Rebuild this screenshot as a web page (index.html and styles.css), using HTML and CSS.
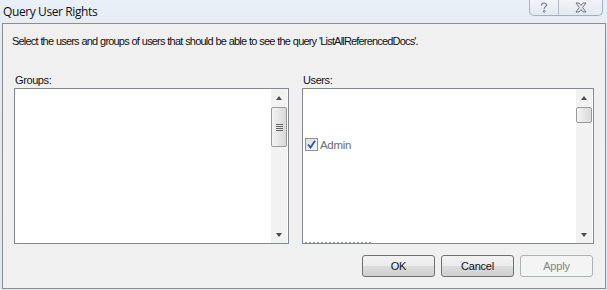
FILE: index.html
```html
<!DOCTYPE html>
<html>
<head>
<meta charset="utf-8">
<link rel="stylesheet" href="styles.css">
</head>
<body>
<div class="window">
  <div class="titlebar">
    <span class="title">Query User Rights</span>
    <div class="captions">
      <div class="cap help"><svg width="10" height="11" viewBox="0 0 10 11"><path d="M2.5 3.5 C2.5 1.5 3.8 1 5 1 C6.4 1 7.5 1.8 7.5 3 C7.5 4.4 5.2 4.8 5.2 6.5 L5.2 7" fill="none" stroke="#6b7580" stroke-width="1.1"/><circle cx="5.2" cy="9.3" r="1" fill="none" stroke="#6b7580" stroke-width="0.9"/></svg></div>
      <div class="cap close"><svg width="14" height="11" viewBox="0 0 14 11"><path d="M2 1 L5 1 L7 3.5 L9 1 L12 1 L8.6 5.5 L12 10 L9 10 L7 7.5 L5 10 L2 10 L5.4 5.5 Z" fill="none" stroke="#6b7580" stroke-width="1"/></svg></div>
    </div>
  </div>
  <div class="client">
    <p class="desc">Select the users and groups of users that should be able to see the query 'ListAllReferencedDocs'.</p>
    <div class="panes">
      <div class="pane groups">
        <div class="label">Groups:</div>
        <div class="listbox">
          <div class="items"></div>
          <div class="scroll">
            <div class="arrow up"></div>
            <div class="track"><div class="thumb big"><span></span><span></span><span></span><span></span></div></div>
            <div class="arrow down"></div>
          </div>
        </div>
      </div>
      <div class="pane users">
        <div class="label">Users:</div>
        <div class="listbox">
          <div class="items">
            <div class="item"><span class="check"><svg width="9" height="9" viewBox="0 0 9 9"><path d="M1 4.5 L3.5 7.5 L8 0.8" fill="none" stroke="#2c55a8" stroke-width="1.8"/></svg></span><span class="name">Admin</span></div>
            <div class="cutoff"></div>
          </div>
          <div class="scroll">
            <div class="arrow up"></div>
            <div class="track"><div class="thumb small"></div></div>
            <div class="arrow down"></div>
          </div>
        </div>
      </div>
    </div>
    <div class="buttons">
      <button class="btn">OK</button>
      <button class="btn">Cancel</button>
      <button class="btn disabled">Apply</button>
    </div>
  </div>
</div>
</body>
</html>
```
FILE: styles.css
```css
html, body {
  margin: 0;
  padding: 0;
}
body {
  width: 607px;
  height: 290px;
  overflow: hidden;
  background: #e4ebf3;
  font-family: "Liberation Sans", Arial, sans-serif;
}
.window {
  width: 607px;
  height: 290px;
  background: linear-gradient(to bottom, #eaf0f7 0px, #e3eaf3 40px, #dfe7f1 290px);
}
.titlebar {
  height: 23px;
  display: flex;
  align-items: flex-start;
}
.title {
  font-family: "Open Sans", "Noto Sans", sans-serif;
  font-size: 12px;
  color: #111;
  padding-left: 3px;
  margin-top: 3px;
  letter-spacing: -0.4px;
}
.captions {
  margin-left: auto;
  margin-right: 4px;
  display: flex;
  height: 15px;
  border: 1px solid #a6b0bd;
  border-top: none;
  border-radius: 0 0 5px 5px;
  background: linear-gradient(to bottom, #f1f4f8, #e4e9f0);
}
.cap {
  display: flex;
  align-items: center;
  justify-content: center;
}
.cap.help {
  width: 28px;
  border-right: 1px solid #b4bcc7;
}
.cap.close {
  width: 43px;
}
.client {
  margin-left: 2px;
  margin-right: 1px;
  height: 264px;
  border: 1px solid #8d8d8d;
  background: #f0f0f0;
  display: flex;
  flex-direction: column;
}
.desc {
  margin: 11px 0 0 9px;
  font-size: 11px;
  line-height: 13px;
  color: #111;
  letter-spacing: -0.82px;
  word-spacing: 0.5px;
}
.panes {
  display: flex;
  margin-top: 26px;
  margin-left: 11px;
  gap: 13px;
}
.pane {
  display: flex;
  flex-direction: column;
}
.groups { width: 275px; }
.users { width: 292px; }
.label {
  font-size: 11px;
  line-height: 13px;
  height: 13px;
  padding-left: 1px;
  color: #111;
  letter-spacing: -0.4px;
}
.listbox {
  margin-top: 1px;
  height: 154px;
  border: 1px solid #828790;
  background: #fff;
  display: flex;
}
.items {
  flex: 1;
  position: relative;
}
.scroll {
  width: 16px;
  margin-right: 1px;
  background: #f2f2f2;
  display: flex;
  flex-direction: column;
}
.arrow {
  height: 17px;
  display: flex;
  align-items: center;
  justify-content: center;
}
.arrow::before {
  content: "";
  width: 0;
  height: 0;
  border-left: 3.5px solid transparent;
  border-right: 3.5px solid transparent;
}
.arrow.up::before {
  border-bottom: 4px solid #4d4d4d;
}
.arrow.down::before {
  border-top: 4px solid #4d4d4d;
}
.track {
  flex: 1;
}
.thumb {
  margin: 1px 0 0 0;
  border: 1px solid #9a9a9a;
  border-radius: 2px;
  background: linear-gradient(to right, #f4f4f4, #e6e6e6 50%, #d9d9d9);
  display: flex;
  flex-direction: column;
  align-items: center;
  justify-content: center;
  gap: 1px;
  box-sizing: border-box;
  width: 16px;
}
.thumb.big { height: 40px; }
.thumb.small { height: 16px; }
.thumb span {
  width: 7px;
  height: 1px;
  background: #666;
}
.item {
  position: absolute;
  left: 2px;
  top: 49px;
  display: flex;
  align-items: center;
  gap: 2px;
}
.check {
  width: 11px;
  height: 11px;
  border: 1px solid #8e8f8f;
  background: linear-gradient(to bottom right, #dedede, #f8f8f8);
  display: flex;
  align-items: center;
  justify-content: center;
}
.name {
  font-size: 11.5px;
  color: #6d6d6d;
  letter-spacing: -0.3px;
}
.cutoff {
  position: absolute;
  left: 2px;
  bottom: 0;
  width: 66px;
  height: 1px;
  background: repeating-linear-gradient(to right, #9a9a9a 0 2px, transparent 2px 4px);
}
.buttons {
  display: flex;
  justify-content: flex-end;
  gap: 6px;
  margin-top: 11px;
  margin-right: 12px;
}
.btn {
  width: 73px;
  height: 22px;
  border: 1px solid #707070;
  border-radius: 3px;
  background: linear-gradient(to bottom, #f2f2f2 0%, #ebebeb 50%, #dddddd 51%, #cfcfcf 100%);
  font-family: "Liberation Sans", Arial, sans-serif;
  font-size: 11px;
  color: #111;
  padding: 0;
  letter-spacing: -0.2px;
}
.btn.disabled {
  border-color: #adb2b5;
  background: #f4f4f4;
  color: #838383;
}
```
